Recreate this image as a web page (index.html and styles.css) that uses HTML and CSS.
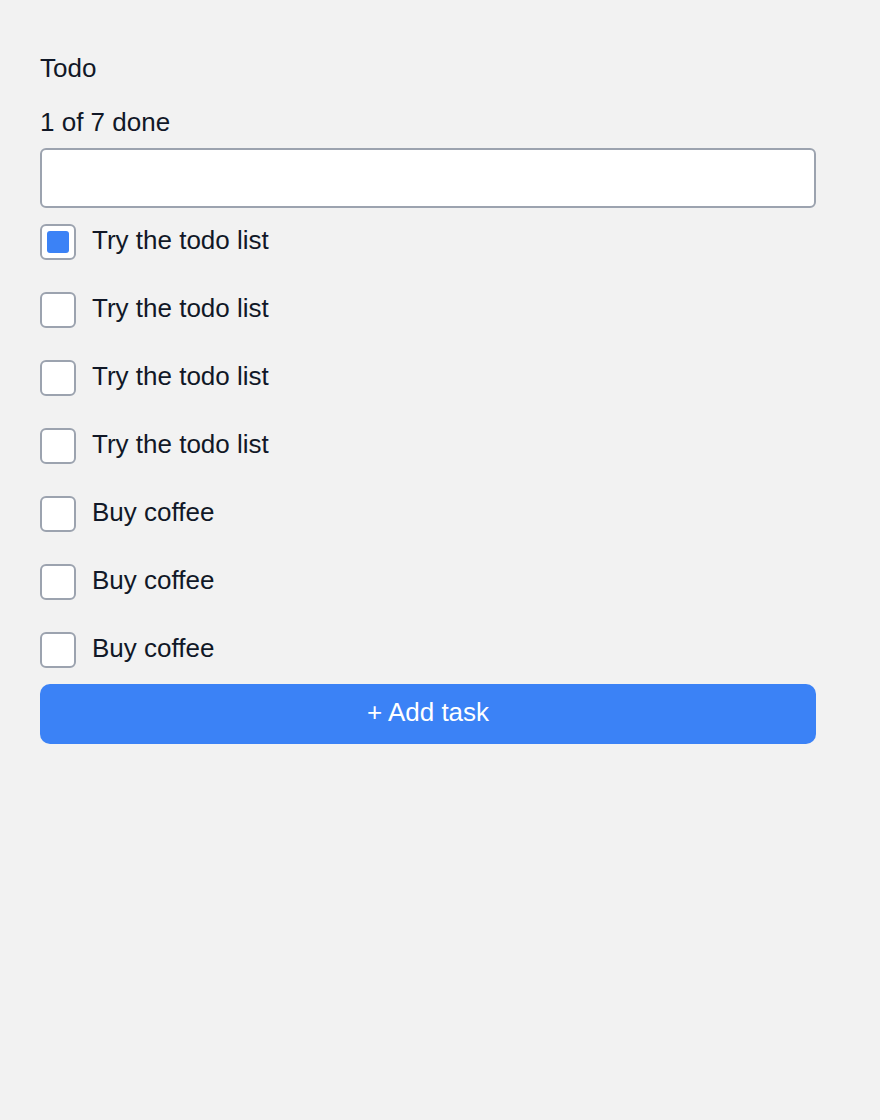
FILE: index.html
```html
<!DOCTYPE html>
<html lang="en">
<head>
<meta charset="utf-8">
<title>Todo</title>
<link rel="stylesheet" href="styles.css">
</head>
<body>
<main class="todo">
  <h1 class="todo-title">Todo</h1>
  <p class="todo-count">1 of 7 done</p>
  <input class="todo-input" type="text" aria-label="New task">
  <ul class="todo-list">
    <li class="todo-item"><span class="check is-done"><span class="check-fill"></span></span><span class="todo-text">Try the todo list</span></li>
    <li class="todo-item"><span class="check"></span><span class="todo-text">Try the todo list</span></li>
    <li class="todo-item"><span class="check"></span><span class="todo-text">Try the todo list</span></li>
    <li class="todo-item"><span class="check"></span><span class="todo-text">Try the todo list</span></li>
    <li class="todo-item"><span class="check"></span><span class="todo-text">Buy coffee</span></li>
    <li class="todo-item"><span class="check"></span><span class="todo-text">Buy coffee</span></li>
    <li class="todo-item"><span class="check"></span><span class="todo-text">Buy coffee</span></li>
  </ul>
  <button class="add-btn" type="button">+ Add task</button>
</main>
</body>
</html>
```

FILE: styles.css
```css
html, body {
  margin: 0;
  padding: 0;
  background: #f2f2f2;
}

body {
  font-family: "Liberation Sans", Arial, sans-serif;
  font-size: 26px;
  line-height: 30px;
  color: #111827;
}

.todo {
  width: 776px;
  padding: 53px 40px 40px;
  display: flex;
  flex-direction: column;
}

.todo-title {
  margin: 0 0 24px;
  font-size: 26px;
  font-weight: 400;
  line-height: 30px;
}

.todo-count {
  margin: 0 0 11px;
}

.todo-input {
  box-sizing: border-box;
  width: 776px;
  height: 60px;
  margin: 0 0 16px;
  border: 2px solid #9ca3af;
  border-radius: 6px;
  background: #ffffff;
  font: inherit;
  padding: 0 12px;
  outline: none;
}

.todo-list {
  list-style: none;
  margin: 0 0 16px;
  padding: 0;
  display: flex;
  flex-direction: column;
  gap: 32px;
}

.todo-item {
  display: flex;
  align-items: flex-start;
  gap: 16px;
  height: 36px;
}

.todo-text {
  padding-top: 1px;
}

.check {
  box-sizing: border-box;
  width: 36px;
  height: 36px;
  flex: none;
  border: 2px solid #9ca3af;
  border-radius: 6px;
  background: #ffffff;
  padding: 5px;
}

.check-fill {
  display: block;
  width: 22px;
  height: 22px;
  border-radius: 3px;
  background: #3b82f6;
}

.add-btn {
  box-sizing: border-box;
  width: 776px;
  height: 60px;
  border: none;
  border-radius: 10px;
  background: #3b82f6;
  color: #ffffff;
  font: inherit;
  line-height: 30px;
  padding: 13px 0 17px;
  text-align: center;
  cursor: pointer;
}
```
